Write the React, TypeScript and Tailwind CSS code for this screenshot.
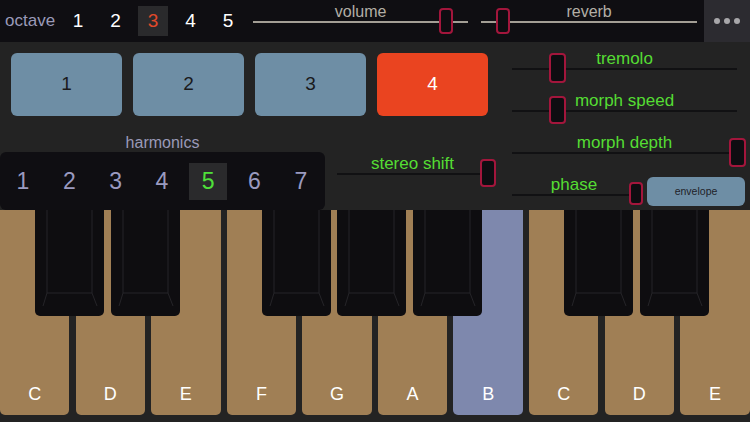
import React from "react";

type SliderProps = {
  label: string;
  width: number;
  value: number;
  thumbW: number;
  thumbH: number;
  thumbTop: number;
  labelClass: string;
  lineClass: string;
};

function Slider({ label, width, value, thumbW, thumbH, thumbTop, labelClass, lineClass }: SliderProps) {
  return (
    <div className="relative flex flex-col" style={{ width }}>
      <div className={`text-center leading-[18px] whitespace-nowrap ${labelClass}`}>{label}</div>
      <div className={`h-[2px] w-full ${lineClass}`} />
      <div
        className="absolute rounded-[4px] border-2 border-[#a3163c] bg-[#0e0d11]"
        style={{ left: value, top: thumbTop, width: thumbW, height: thumbH }}
      />
    </div>
  );
}

const whiteKeys = ["C", "D", "E", "F", "G", "A", "B", "C", "D", "E"];
const blackKeys = [0, 1, 3, 4, 5, 7, 8];

function BlackKey({ index }: { index: number }) {
  return (
    <div
      className="absolute top-0 h-[106px] w-[69px] rounded-b-[5px] bg-[#0e0d10]"
      style={{ left: index * 75.6 + 35 }}
    >
      <svg className="absolute inset-0" width="69" height="106" viewBox="0 0 69 106">
        <path d="M12 0 V83 H57 V0 M12 83 L8 96 M57 83 L62 96" fill="none" stroke="#252428" strokeWidth="1" />
      </svg>
    </div>
  );
}

export default function App() {
  const sans = { fontFamily: '"Liberation Sans", Arial, sans-serif' };
  return (
    <div className="flex h-[422px] w-[750px] flex-col overflow-hidden bg-[#232323]" style={sans}>
      {/* top bar */}
      <div className="flex h-[42px] items-start bg-[#0f0e12]">
        <div className="flex h-full items-center pl-[5px] text-[17px] text-[#9a9ab8]">octave</div>
        <div className="ml-[8px] flex h-full items-center gap-[7.5px]">
          {[1, 2, 3, 4, 5].map((n) => (
            <div
              key={n}
              className={`flex h-[30px] w-[30px] items-center justify-center text-[19px] ${
                n === 3 ? "bg-[#2a2a2c] text-[#e0492a]" : "text-white"
              }`}
            >
              {n}
            </div>
          ))}
        </div>
        <div className="ml-[10px] pt-[3px]">
          <Slider
            label="volume"
            width={215}
            value={186}
            thumbW={14}
            thumbH={26}
            thumbTop={5}
            labelClass="text-[16px] text-[#b3aea6]"
            lineClass="bg-[#a39e95]"
          />
        </div>
        <div className="ml-[13px] pt-[3px]">
          <Slider
            label="reverb"
            width={216}
            value={15}
            thumbW={14}
            thumbH={26}
            thumbTop={5}
            labelClass="text-[16px] text-[#b3aea6]"
            lineClass="bg-[#a39e95]"
          />
        </div>
        <div className="ml-auto flex h-full w-[46px] items-center justify-center gap-[4px] bg-[#2c2b30]">
          <span className="h-[6px] w-[6px] rounded-full bg-[#a8a7aa]" />
          <span className="h-[6px] w-[6px] rounded-full bg-[#a8a7aa]" />
          <span className="h-[6px] w-[6px] rounded-full bg-[#a8a7aa]" />
        </div>
      </div>

      {/* control panel */}
      <div className="flex h-[168px]">
        <div className="flex w-[500px] flex-col">
          <div className="flex gap-[11px] pl-[11px] pt-[11px]">
            {[1, 2, 3, 4].map((n) => (
              <div
                key={n}
                className={`flex h-[63px] w-[111px] items-center justify-center rounded-[6px] text-[19px] ${
                  n === 4 ? "bg-[#ea4420] text-white" : "bg-[#6e8ea5] text-[#1a1a1c]"
                }`}
              >
                {n}
              </div>
            ))}
          </div>
          <div className="flex items-start">
            <div className="mt-[18px] flex w-[325px] flex-col">
              <div className="text-center text-[16px] leading-[18px] text-[#9a9ab8]">harmonics</div>
              <div className="flex h-[58px] items-center gap-[8.3px] rounded-[6px] bg-[#0f0e12] pl-[4px]">
                {[1, 2, 3, 4, 5, 6, 7].map((n) => (
                  <div
                    key={n}
                    className={`flex h-[37px] w-[38px] items-center justify-center text-[23px] ${
                      n === 5 ? "bg-[#2a2a2c] text-[#4fe03a]" : "text-[#9a9ac0]"
                    }`}
                  >
                    {n}
                  </div>
                ))}
              </div>
            </div>
            <div className="ml-[12px] mt-[39px]">
              <Slider
                label="stereo shift"
                width={151}
                value={143}
                thumbW={16}
                thumbH={28}
                thumbTop={4}
                labelClass="text-[17px] text-[#55dd33]"
                lineClass="bg-[#111113]"
              />
            </div>
          </div>
        </div>

        <div className="flex flex-1 flex-col gap-[22px] pl-[12px] pt-[8px]">
          <Slider
            label="tremolo"
            width={225}
            value={37}
            thumbW={17}
            thumbH={30}
            thumbTop={3}
            labelClass="text-[17px] text-[#55dd33]"
            lineClass="bg-[#111113]"
          />
          <Slider
            label="morph speed"
            width={225}
            value={37}
            thumbW={17}
            thumbH={28}
            thumbTop={4}
            labelClass="text-[17px] text-[#55dd33]"
            lineClass="bg-[#111113]"
          />
          <Slider
            label="morph depth"
            width={225}
            value={217}
            thumbW={17}
            thumbH={29}
            thumbTop={4}
            labelClass="text-[17px] text-[#55dd33]"
            lineClass="bg-[#111113]"
          />
          <div className="flex items-start">
            <Slider
              label="phase"
              width={124}
              value={117}
              thumbW={14}
              thumbH={23}
              thumbTop={6}
              labelClass="text-[17px] text-[#55dd33]"
              lineClass="bg-[#111113]"
            />
            <div className="ml-[11px] mt-[1px] flex h-[29px] w-[98px] items-center justify-center rounded-[6px] bg-[#6e8ea5] text-[10.5px] text-[#1e2228]">
              envelope
            </div>
          </div>
        </div>
      </div>

      {/* keyboard */}
      <div className="relative h-[212px]">
        <div className="flex gap-[6.2px]">
          {whiteKeys.map((k, i) => (
            <div
              key={i}
              className={`flex h-[205px] w-[69.4px] shrink-0 flex-col items-center justify-end rounded-b-[5px] pb-[11px] text-[18px] leading-[20px] text-white ${
                i === 6 ? "bg-[#7e88ad]" : "bg-[#a07f55]"
              }`}
            >
              {k}
            </div>
          ))}
        </div>
        {blackKeys.map((b) => (
          <BlackKey key={b} index={b} />
        ))}
      </div>
    </div>
  );
}
